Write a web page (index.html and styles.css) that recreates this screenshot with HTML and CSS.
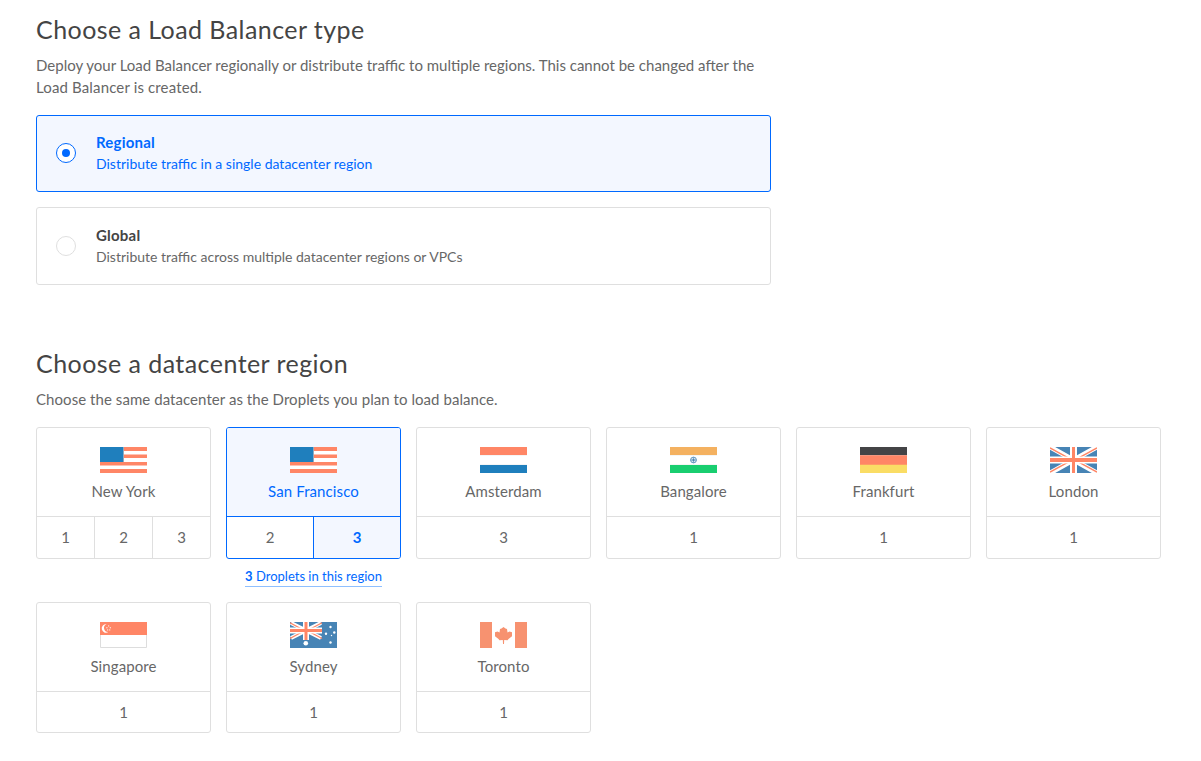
FILE: index.html
```html
<!DOCTYPE html>
<html lang="en">
<head>
<meta charset="utf-8">
<title>Create Load Balancer</title>
<link rel="stylesheet" href="styles.css">
</head>
<body>
<svg class="defs" aria-hidden="true">
  <symbol id="us" viewBox="0 0 47 26">
    <rect width="47" height="26" fill="#fff"/>
    <path fill="#ff8666" d="M0 0h47v4H0zM0 7.6h47V11H0zM0 15h47v3.5H0zM0 22h47v4H0z"/>
    <rect width="24" height="15" fill="#93a9bd"/>
    <rect width="23" height="15" fill="#1f7fbd"/>
  </symbol>
  <symbol id="jack" viewBox="0 0 47 26">
    <rect width="47" height="26" fill="#4784b5"/>
    <path stroke="#fff" stroke-width="5" d="M0 0l47 26M47 0L0 26"/>
    <path stroke="#ff8666" stroke-width="1.5" d="M0 .8l20 11M47 25.2l-20-11M47 .8l-20 11M0 25.2l20-11"/>
    <path fill="#fff" d="M20 0h7v9.5h20v7H27V26h-7v-9.5H0v-7h20z"/>
    <path fill="#ff8666" d="M22 0h3v11h22v4H25v11h-3V15H0v-4h22z"/>
  </symbol>
</svg>
<main class="page">
  <section class="types">
    <h2 class="title">Choose a Load Balancer type</h2>
    <p class="lead">Deploy your Load Balancer regionally or distribute traffic to multiple regions. This cannot be changed after the<br><span class="lead-wide">Load Balancer is created.</span></p>
    <div class="options">
      <label class="option option-on">
        <span class="radio"></span>
        <span class="option-text"><b class="option-name">Regional</b><span class="option-info">Distribute traffic in a single datacenter region</span></span>
      </label>
      <label class="option">
        <span class="radio"></span>
        <span class="option-text"><b class="option-name">Global</b><span class="option-info">Distribute traffic across multiple datacenter regions or VPCs</span></span>
      </label>
    </div>
  </section>
  <section class="regions">
    <h2 class="title">Choose a datacenter region</h2>
    <p class="lead lead-region">Choose the same datacenter as the Droplets you plan to load balance.</p>
    <div class="grid">
      <div class="cell"><div class="card">
        <div class="place"><svg class="flag"><use href="#us"/></svg><span>New York</span></div>
        <div class="slots"><span>1</span><span>2</span><span>3</span></div>
      </div></div>
      <div class="cell"><div class="card card-on">
        <div class="place"><svg class="flag"><use href="#us"/></svg><span>San Francisco</span></div>
        <div class="slots"><span>2</span><span class="slot-on">3</span></div>
      </div><a class="droplets"><b>3</b> Droplets in this region</a></div>
      <div class="cell"><div class="card">
        <div class="place"><svg class="flag" viewBox="0 0 47 26"><path fill="#ff8666" d="M0 0h47v8H0z"/><path fill="#f5f5f5" d="M0 8h47v1H0zM0 17h47v1H0z"/><path fill="#1f7fbd" d="M0 18h47v8H0z"/></svg><span>Amsterdam</span></div>
        <div class="slots"><span>3</span></div>
      </div></div>
      <div class="cell"><div class="card">
        <div class="place"><svg class="flag" viewBox="0 0 47 26"><path fill="#f4b160" d="M0 0h47v8H0z"/><path fill="#f5f5f5" d="M0 8h47v1H0zM0 17h47v1H0z"/><path fill="#19ce70" d="M0 18h47v8H0z"/><circle cx="23.5" cy="13" r="2.9" fill="#d9e6f1" stroke="#6799c2" stroke-width="1"/><path d="M23.5 10v6M20.5 13h6" stroke="#6799c2" stroke-width=".8"/><circle cx="23.5" cy="13" r="1.1" fill="#4784b5"/></svg><span>Bangalore</span></div>
        <div class="slots"><span>1</span></div>
      </div></div>
      <div class="cell"><div class="card">
        <div class="place"><svg class="flag" viewBox="0 0 47 26"><path fill="#444446" d="M0 0h47v8.3H0z"/><path fill="#ff8666" d="M0 8.3h47V18H0z"/><path fill="#fadd65" d="M0 17.8h47V26H0z"/></svg><span>Frankfurt</span></div>
        <div class="slots"><span>1</span></div>
      </div></div>
      <div class="cell"><div class="card">
        <div class="place"><svg class="flag"><use href="#jack"/></svg><span>London</span></div>
        <div class="slots"><span>1</span></div>
      </div></div>
      <div class="cell"><div class="card card-short">
        <div class="place"><svg class="flag" viewBox="0 0 47 26"><path fill="#fff" stroke="#ddd" d="M.5.5h46v25H.5z"/><path fill="#ff8666" d="M0 0h47v13H0z"/><path fill="#fff" d="M6.600 2.200a4.300 4.300 0 1 0 1.700 7.900A4.100 4.100 0 0 1 6.600 2.200z"/><g fill="#ffe6df"><circle cx="8.600" cy="3.900" r=".7"/><circle cx="6.900" cy="5.700" r=".7"/><circle cx="10.300" cy="5.700" r=".7"/><circle cx="7.600" cy="7.900" r=".7"/><circle cx="9.700" cy="7.900" r=".7"/></g></svg><span>Singapore</span></div>
        <div class="slots"><span>1</span></div>
      </div></div>
      <div class="cell"><div class="card card-short">
        <div class="place"><svg class="flag" viewBox="0 0 47 26"><path fill="#4784b5" d="M0 0h47v26H0z"/>
          <path stroke="#fff" stroke-width="4" d="M1 1l30 15M31 1L1 16"/>
          <path stroke="#ff8666" stroke-width="1.3" d="M0 .8l13 7M32 16.5l-13-7M32 .8l-13 7M0 16.5l13-7"/>
          <path fill="#fff" d="M13 0h6v5.500h13v6H19V18h-6v-6.500H0v-6h13z"/>
          <path fill="#ff8666" d="M14.500 0h3v7H32v3H17.500v8h-3v-8H0V7h14.500z"/>
          <g fill="#fff"><circle cx="15.800" cy="21.300" r="2.300"/><circle cx="40.500" cy="5" r="1.200"/><circle cx="36" cy="11.800" r="1.200"/><circle cx="44.300" cy="10.500" r="1.200"/><circle cx="41.500" cy="13.500" r=".7"/><circle cx="40.500" cy="20.500" r="1.200"/></g></svg><span>Sydney</span></div>
        <div class="slots"><span>1</span></div>
      </div></div>
      <div class="cell"><div class="card card-short">
        <div class="place"><svg class="flag" viewBox="0 0 47 26"><path fill="#f79270" d="M0 0h12v26H0zM35 0h12v26H35zM23.500 5l2 1.500 1.500.5.500 3.500 2-1 2.500.8v4l-3.500 2.800-1 1.200-3.300-.3-.2 4h-1l-.2-4-3.300.3-1-1.200-3.500-2.800v-4l2.500-.8 2 1 .5-3.500 1.500-.5z"/></svg><span>Toronto</span></div>
        <div class="slots"><span>1</span></div>
      </div></div>
    </div>
  </section>
</main>
</body>
</html>
```
FILE: styles.css
```css
* { box-sizing: border-box; }
body {
  margin: 0;
  background: #fff;
  color: #676767;
  font: 15px/22px Lato, "Open Sans", sans-serif;
}
.defs { display: none; }
.page { width: 1201px; padding: 13px 40px 0 36px; }
.title { margin: 0; color: #444; font-size: 25px; line-height: 32px; font-weight: 400; letter-spacing: 0.44px; white-space: nowrap; }
.lead { margin: 9px 0 17px; white-space: nowrap; }
.lead-wide { letter-spacing: 0.14px; }
.lead-region { letter-spacing: 0.06px; }
.options { display: flex; flex-direction: column; gap: 15px; width: 735px; }
.option {
  display: flex;
  align-items: center;
  gap: 20px;
  height: 78px;
  padding: 0 19px;
  border: 1px solid #dfdfdf;
  border-radius: 3px;
}
.option-on { height: 77px; border-color: #0069ff; background: #f3f7ff; color: #0069ff; }
.radio {
  display: flex;
  align-items: center;
  justify-content: center;
  width: 20px;
  height: 20px;
  border: 1px solid #dfdfdf;
  border-radius: 50%;
  background: #fff;
}
.option-on .radio { margin-bottom: 1px; border-color: #0069ff; }
.option-on .radio::after { content: ""; width: 8px; height: 8px; border-radius: 50%; background: #0069ff; }
.option-text { display: flex; flex-direction: column; align-items: flex-start; padding-bottom: 1px; }
.option-on .option-text { padding-bottom: 2px; }
.option-name { color: #444; font-weight: 700; line-height: 22px; letter-spacing: 0.22px; }
.option-on .option-name { color: #0069ff; }
.option-info { font-size: 14px; line-height: 22px; }
.regions { padding-top: 62px; }
.grid { display: grid; grid-template-columns: repeat(6, 175px); grid-auto-rows: 160px; gap: 15px; }
.cell { display: flex; flex-direction: column; align-items: center; }
.card { flex: none; width: 175px; height: 132px; border: 1px solid #dfdfdf; border-radius: 3px; overflow: hidden; }
.card-short { height: 131px; }
.place { display: flex; flex-direction: column; align-items: center; height: 88px; padding-top: 19px; gap: 7px; letter-spacing: 0.1px; }
.flag { display: block; width: 47px; height: 26px; }
.slots { display: flex; height: 42px; border-top: 1px solid #dfdfdf; }
.slots span { flex: 1; text-align: center; line-height: 40px; }
.slots span + span { border-left: 1px solid #dfdfdf; }
.card-on, .card-on .slots, .card-on .slots span + span { border-color: #0069ff; }
.card-on .place { background: #f3f7ff; color: #0069ff; }
.card-on .slot-on { background: #f3f7ff; color: #0069ff; font-weight: 700; }
.droplets {
  flex: none;
  margin-top: 8px;
  border-bottom: 1px solid #8fc0ff;
  color: #0069ff;
  font-size: 13px;
  line-height: 19px;
  white-space: nowrap;
}
```
